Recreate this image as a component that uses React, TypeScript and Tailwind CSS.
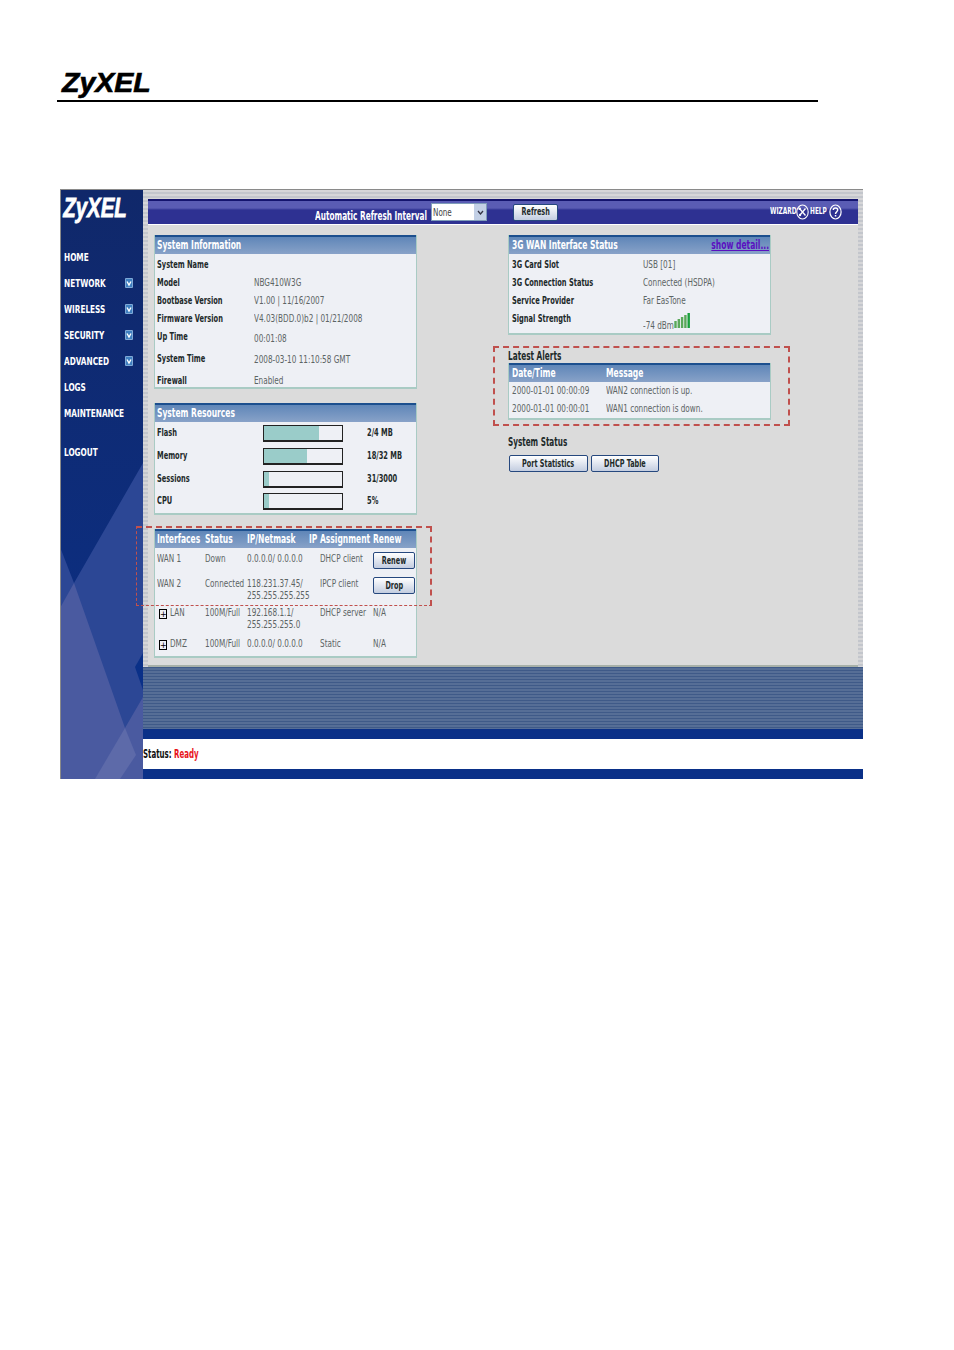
import React from "react";

const nav: [string, boolean][] = [
  ["HOME", false],
  ["NETWORK", true],
  ["WIRELESS", true],
  ["SECURITY", true],
  ["ADVANCED", true],
  ["LOGS", false],
  ["MAINTENANCE", false],
];

const LABEL = "font-bold text-[#1d2a2a] text-[10px] leading-[12px] scale-x-[0.74]";
const VALUE = "text-[#5c6464] text-[10px] leading-[12px] scale-x-[0.81]";
const HEAD = "scale-x-[0.73]";

function T({ c, children }: { c: string; children: React.ReactNode }) {
  return <div className={"block w-max whitespace-nowrap origin-left " + c}>{children}</div>;
}

function Panel({ title, right, children, className }: { title?: React.ReactNode; right?: React.ReactNode; children: React.ReactNode; className?: string }) {
  return (
    <div className={"w-[263px] bg-[#eef0f5] border-x border-b-2 border-[#a9cbc4] " + (className ?? "")}>
      <div className="h-[19px] border-t-2 border-[#1c4f8e] bg-gradient-to-b from-[#5f86b8] to-[#88a2c8] flex items-center justify-between pl-[2px] pr-px text-[11.5px] font-bold text-white">
        {title}
        {right}
      </div>
      {children}
    </div>
  );
}

function KV({ k, v, h, vTop = 0, vLeft = 253 }: { k: string; v: React.ReactNode; h: number; vTop?: number; vLeft?: number }) {
  return (
    <div className="flex pl-[2px]" style={{ height: h }}>
      <div className="mt-[5px]" style={{ width: vLeft - 156 }}><T c={LABEL}>{k}</T></div>
      <div style={{ marginTop: 5 + vTop }}><T c={VALUE}>{v}</T></div>
    </div>
  );
}

function Bar({ label, value, pct, h }: { label: string; value: string; pct: number; h: number }) {
  return (
    <div className="flex pl-[2px]" style={{ height: h }}>
      <div className="w-[106px] mt-[5px]"><T c={LABEL}>{label}</T></div>
      <div className="w-[80px] h-[17px] mt-[3px] border border-b-2 border-[#222] bg-[#eef0f5]">
        <div className="h-full bg-[#9accc9]" style={{ width: `${pct}%` }} />
      </div>
      <div className="ml-[24px] mt-[5px]"><T c={LABEL}>{value}</T></div>
    </div>
  );
}

function Btn({ children, className }: { children: React.ReactNode; className?: string }) {
  return (
    <div className={"flex items-center justify-center rounded-[2px] border border-[#26487e] bg-gradient-to-b from-white to-[#c3cde0] " + (className ?? "")}>
      <span className="inline-block whitespace-nowrap font-bold text-[10px] text-[#1d2a2a] leading-none scale-x-[0.72]">{children}</span>
    </div>
  );
}

function Check() {
  return (
    <svg width="8" height="10" viewBox="0 0 8 10" className="block -mt-[2px]">
      <rect width="8" height="10" rx="1" fill="#7fa9d6" />
      <rect x="1" y="1" width="6" height="8" fill="#3f7fc0" />
      <path d="M2 3.5 L4 7 L6 3.5" fill="none" stroke="#fff" strokeWidth="1.4" />
    </svg>
  );
}

const ifaceRows = [
  { h: 25, name: "WAN 1", status: "Down", ip: ["0.0.0.0/ 0.0.0.0"], asg: "DHCP client", btn: "Renew", pt: 5, plus: false },
  { h: 33, name: "WAN 2", status: "Connected", ip: ["118.231.37.45/", "255.255.255.255"], asg: "IPCP client", btn: "Drop", pt: 5, plus: false },
  { h: 31, name: "LAN", status: "100M/Full", ip: ["192.168.1.1/", "255.255.255.0"], asg: "DHCP server", btn: "N/A", pt: 1, plus: true },
  { h: 19, name: "DMZ", status: "100M/Full", ip: ["0.0.0.0/ 0.0.0.0"], asg: "Static", btn: "N/A", pt: 1, plus: true },
];

const ZY = "font-['Liberation_Sans',sans-serif] font-bold italic";

export default function App() {
  return (
    <div className="relative w-[954px] h-[1350px] bg-white overflow-hidden font-['DejaVu_Sans_Condensed','DejaVu_Sans',sans-serif]">
      <div className="pl-[57px] pt-[65px]">
        <div className={`${ZY} pl-[5px] h-[35px] text-[28.5px] leading-[35px] text-black [-webkit-text-stroke:0.7px_black]`}>ZyXEL</div>
        <div className="w-[761px] h-[2px] bg-black" />
      </div>

      <div className="relative ml-[60px] mt-[87px] w-[803px] h-[590px] flex border-t border-[#8a8a8a]">
        {/* Sidebar */}
        <div className="relative w-[83px] h-full border-l border-[#8a8a8a] bg-gradient-to-b from-[#10286a] to-[#0a3088] overflow-hidden shrink-0">
          <svg className="absolute left-[-1px] top-[-1px]" width="83" height="590" viewBox="60 189 83 590">
            <polygon points="143,463 74,583 60,547 60,779 143,779" fill="#2c4795" />
            <polygon points="60,608 74,583 125,728 143,697 143,779 60,779" fill="#4a5aa0" />
            <polygon points="125,728 136,755 120,779 95,779" fill="#5d6aa9" />
            <polygon points="143,653 135,667 143,690" fill="#0a3088" />
          </svg>
          <div className="relative">
            <div className={`${ZY} pl-[3px] h-[52px] text-[28px] leading-[36px] text-white origin-left scale-x-[0.73] whitespace-nowrap [-webkit-text-stroke:0.8px_white]`}>ZyXEL</div>
            <div className="pl-[3px] pt-[3px] text-white font-bold text-[11px]">
              {nav.map(([n, c]) => (
                <div key={n} className="h-[26px] flex items-center justify-between pr-[10px]">
                  <T c="scale-x-[0.74]">{n}</T>
                  {c && <Check />}
                </div>
              ))}
              <div className="h-[26px] mt-[13px] flex items-center"><T c="scale-x-[0.74]">LOGOUT</T></div>
            </div>
          </div>
        </div>

        {/* Main */}
        <div className="flex-1 flex flex-col min-w-0">
          <div className="h-[477px] px-[5px] pt-[9px] bg-[repeating-linear-gradient(180deg,#d6d6d8_0,#d6d6d8_2px,#c3c6cc_2px,#c3c6cc_4px)]">
            <div className="h-[468px] bg-[#dbdbdb] border-b-2 border-[#a7b0a8]">
              {/* Top bar */}
              <div className="h-[26px] border-b border-white bg-[linear-gradient(180deg,#14146e_0,#14146e_2px,#5a5cb4_2px,#5a5cb4_9px,#2e3192_11px,#2e3192_100%)] flex items-center text-white">
                <div className="ml-[167px] w-[116px] pt-[10px]"><T c="font-bold text-[11.5px] scale-x-[0.71]">Automatic Refresh Interval</T></div>
                <div className="w-[56px] h-[18px] mt-px bg-white flex items-center justify-between border border-[#7f9db9] text-[#444] text-[10px] pl-px">
                  <T c="scale-x-[0.8]">None</T>
                  <span className="w-[12px] h-full bg-[#c3d0e6] flex items-center justify-center">
                    <svg width="7" height="5" viewBox="0 0 7 5"><path d="M1 1 L3.5 4 L6 1" fill="none" stroke="#334" strokeWidth="1.3" /></svg>
                  </span>
                </div>
                <Btn className="ml-[26px] mt-px w-[45px] h-[17px] border-[#3a5a7a]">Refresh</Btn>
                <div className="ml-[212px] w-[26px] mt-px"><T c="font-bold text-[9px] scale-x-[0.72]">WIZARD</T></div>
                <svg width="13" height="16" viewBox="0 0 13 16">
                  <ellipse cx="6.5" cy="8" rx="5.7" ry="7" fill="none" stroke="#fff" strokeWidth="1.1" />
                  <path d="M3.5 4.5 L9.5 11.5 M9.5 4.5 L4 11" stroke="#fff" strokeWidth="1.3" />
                  <circle cx="3.7" cy="4.8" r="1.3" fill="#fff" />
                  <circle cx="4" cy="11" r="1.2" fill="#fff" />
                </svg>
                <div className="ml-px w-[18px] mt-px"><T c="font-bold text-[9px] scale-x-[0.72]">HELP</T></div>
                <svg width="13" height="16" viewBox="0 0 13 16" className="ml-px">
                  <ellipse cx="6.5" cy="8" rx="5.6" ry="7" fill="none" stroke="#fff" strokeWidth="1.2" />
                  <path d="M4.3 6 C4.3 3.4 8.7 3.4 8.7 6 C8.7 7.7 6.5 7.7 6.5 10" fill="none" stroke="#fff" strokeWidth="1.4" />
                  <rect x="5.8" y="11" width="1.5" height="1.5" fill="#fff" />
                </svg>
              </div>

              <div className="flex pl-[6px] pt-[10px]">
                {/* Left column */}
                <div className="w-[354px] flex flex-col">
                  <Panel title={<T c={HEAD}>System Information</T>}>
                    <KV k="System Name" v="" h={18} />
                    <KV k="Model" v="NBG410W3G" h={18} />
                    <KV k="Bootbase Version" v="V1.00 | 11/16/2007" h={18} />
                    <KV k="Firmware Version" v="V4.03(BDD.0)b2 | 01/21/2008" h={18} />
                    <KV k="Up Time" v="00:01:08" h={22} vTop={2} />
                    <KV k="System Time" v="2008-03-10 11:10:58 GMT" h={22} vTop={1} />
                    <KV k="Firewall" v="Enabled" h={17} />
                  </Panel>
                  <Panel title={<T c={HEAD}>System Resources</T>} className="mt-[14px]">
                    <Bar label="Flash" value="2/4 MB" pct={70} h={23} />
                    <Bar label="Memory" value="18/32 MB" pct={55} h={23} />
                    <Bar label="Sessions" value="31/3000" pct={6} h={22} />
                    <Bar label="CPU" value="5%" pct={6} h={23} />
                  </Panel>
                  <Panel title={
                    <div className="grid grid-cols-[48px_42px_62px_64px_auto] w-full">
                      <T c={HEAD}>Interfaces</T><T c={HEAD}>Status</T><T c={HEAD}>IP/Netmask</T><T c={HEAD}>IP Assignment</T><T c={HEAD}>Renew</T>
                    </div>
                  } className="mt-[14px]">
                    {ifaceRows.map((r) => (
                      <div key={r.name} className="grid grid-cols-[48px_42px_73px_53px_auto] pl-[2px]" style={{ height: r.h, paddingTop: r.pt }}>
                        <div className="flex items-start">
                          {r.plus && <span className="mt-[2px] ml-[2px] mr-[3px] w-[8px] h-[10px] border border-black text-black text-[9px] leading-[8px] text-center">+</span>}
                          <T c={VALUE}>{r.name}</T>
                        </div>
                        <div><T c={VALUE}>{r.status}</T></div>
                        <div>{r.ip.map((l) => <div key={l} className="h-[12px]"><T c={VALUE}>{l}</T></div>)}</div>
                        <div><T c={VALUE}>{r.asg}</T></div>
                        {r.btn === "N/A" ? <div><T c={VALUE}>N/A</T></div> : <Btn className="w-[42px] h-[17px] -mt-px">{r.btn}</Btn>}
                      </div>
                    ))}
                  </Panel>
                </div>

                {/* Right column */}
                <div className="flex flex-col w-[263px]">
                  <Panel className="[&>div]:pl-[3px]" title={<T c={HEAD}>3G WAN Interface Status</T>} right={<a className="inline-block whitespace-nowrap origin-right scale-x-[0.73] text-[#5a10c0] underline">show detail...</a>}>
                    <KV k="3G Card Slot" v="USB [01]" h={18} vLeft={287} />
                    <KV k="3G Connection Status" v="Connected (HSDPA)" h={18} vLeft={287} />
                    <KV k="Service Provider" v="Far EasTone" h={18} vLeft={287} />
                    <div className="flex h-[25px]">
                      <div className="w-[131px] mt-[5px]"><T c={LABEL}>Signal Strength</T></div>
                      <div className="flex items-end pb-px">
                        <div className="w-[31px]"><T c={VALUE}>-74 dBm</T></div>
                        <svg width="17" height="16" viewBox="0 0 17 16" className="mb-[4px]">
                          {[0, 1, 2, 3, 4].map((i) => (
                            <rect key={i} x={i * 3.3 + 0.3} y={9 - i * 2} width="2.4" height={7 + i * 2} fill={i === 4 ? "#19a03c" : "#5aa85a"} />
                          ))}
                        </svg>
                      </div>
                    </div>
                  </Panel>
                  <div className="mt-[15px] h-[13px] text-[11.5px] font-bold text-[#1d2a2a] leading-[13px]"><T c="scale-x-[0.71]">Latest Alerts</T></div>
                  <Panel className="[&>div]:pl-[3px]" title={<div className="grid grid-cols-[94px_auto] w-full"><T c={HEAD}>Date/Time</T><T c={HEAD}>Message</T></div>}>
                    {[["2000-01-01 00:00:09", "WAN2 connection is up."], ["2000-01-01 00:00:01", "WAN1 connection is down."]].map(([d, m]) => (
                      <div key={d} className="grid grid-cols-[94px_auto] h-[18px] pt-[3px]">
                        <div><T c={VALUE}>{d}</T></div><div><T c={VALUE}>{m}</T></div>
                      </div>
                    ))}
                  </Panel>
                  <div className="mt-[16px] h-[13px] text-[11.5px] font-bold text-[#1d2a2a] leading-[13px]"><T c="scale-x-[0.7]">System Status</T></div>
                  <div className="flex gap-[3px] mt-[6px] ml-px">
                    <Btn className="w-[79px] h-[17px]">Port Statistics</Btn>
                    <Btn className="w-[68px] h-[17px]">DHCP Table</Btn>
                  </div>
                </div>
              </div>
            </div>
          </div>
          <div className="h-[62px] bg-[repeating-linear-gradient(180deg,#3f5a88_0,#3f5a88_1px,#566e96_1px,#566e96_3px)]" />
          <div className="h-[10px] bg-[#0a3088]" />
          <div className="h-[30px] bg-white flex items-center pt-[1px] text-[11.5px] font-bold text-[#111]">
            <T c="scale-x-[0.68]">Status: <span className="text-[#e8141c]">Ready</span></T>
          </div>
          <div className="h-[10px] bg-[#0a3088]" />
        </div>

        {/* Annotation highlights */}
        <div className="absolute left-[76px] top-[336px] w-[296px] h-[80px] border-t-2 border-r-2 border-l border-b border-dashed border-[#c0504d]" />
        <div className="absolute left-[433px] top-[156px] w-[297px] h-[80px] border-2 border-dashed border-[#c0504d]" />
      </div>
    </div>
  );
}
